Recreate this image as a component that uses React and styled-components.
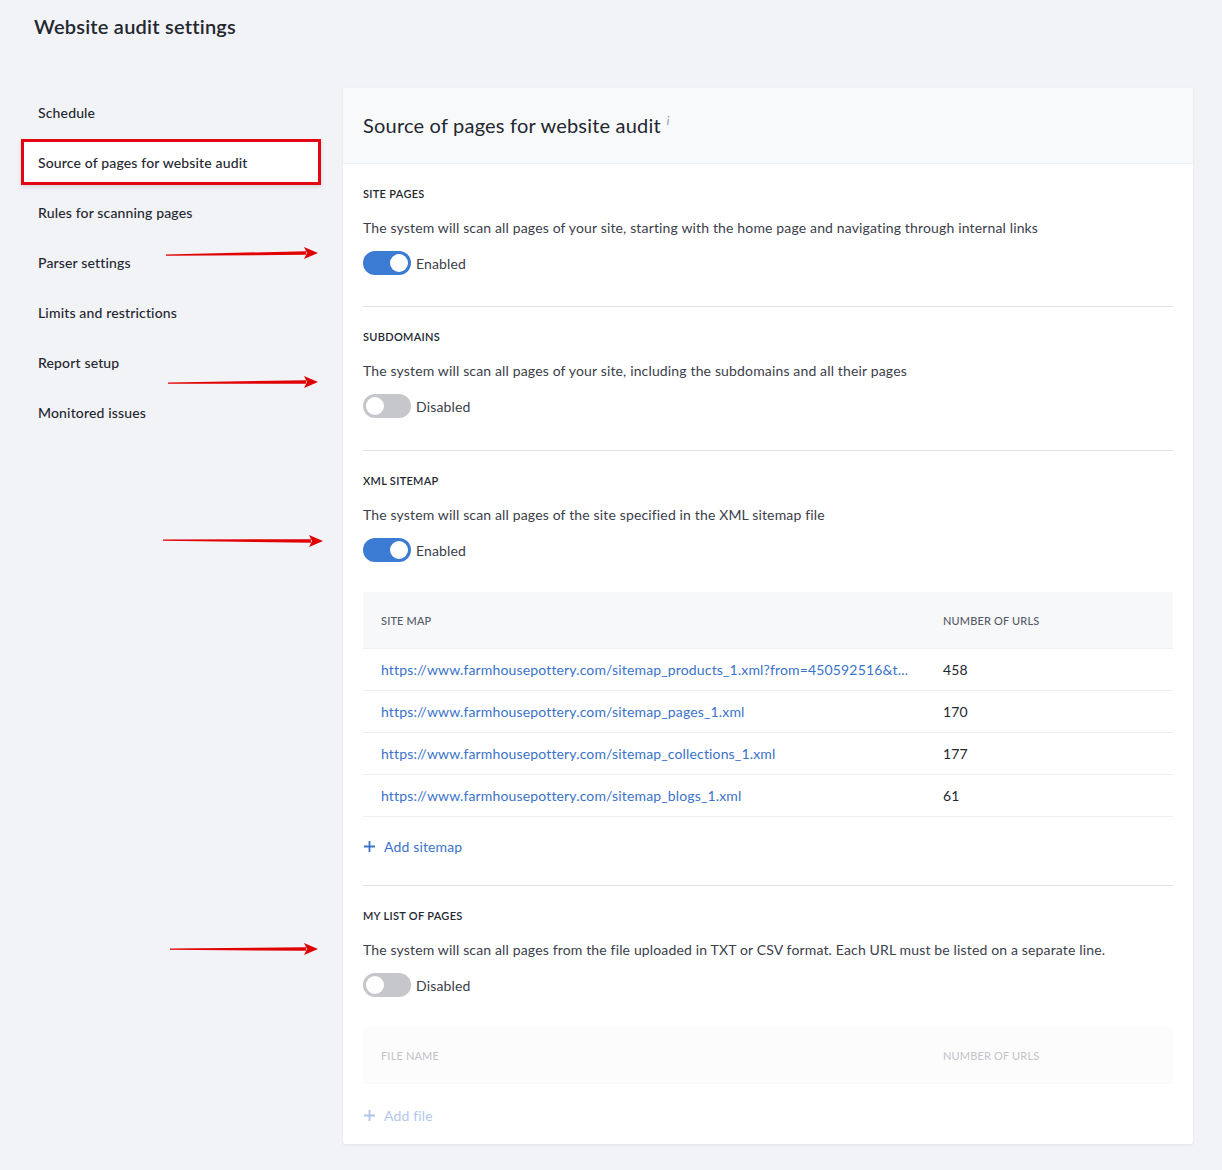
import React from "react";
import styled, { createGlobalStyle } from "styled-components";

const GlobalStyle = createGlobalStyle`
  body {
    margin: 0;
    background: #f2f3f7;
    font-family: Lato, "Noto Sans", sans-serif;
    color: #23272f;
    letter-spacing: 0.15px;
  }
`;

const Page = styled.div`
  position: relative;
  width: 1222px;
  min-height: 1170px;
  padding: 13px 29px 26px 21px;
  box-sizing: border-box;
`;

const Title = styled.h1`
  margin: 0 0 0 13px;
  font-size: 20px;
  line-height: 26px;
  font-weight: 600;
  letter-spacing: 0.22px;
  color: #23272f;
`;

const Layout = styled.div`
  display: flex;
  gap: 22px;
  margin-top: 49px;
  align-items: flex-start;
`;

const Sidebar = styled.nav`
  width: 300px;
  flex-shrink: 0;
  padding-top: 1px;
  display: flex;
  flex-direction: column;
  gap: 4px;
`;

const NavItem = styled.div`
  height: 46px;
  display: flex;
  align-items: center;
  padding-left: ${(p) => (p.$active ? "14px" : "17px")};
  box-sizing: border-box;
  font-size: 14px;
  font-weight: 500;
  color: #23272f;
  background: ${(p) => (p.$active ? "#fff" : "transparent")};
  border: ${(p) => (p.$active ? "3px solid #e30613" : "none")};
  box-shadow: ${(p) => (p.$active ? "0 2px 4px rgba(0,0,0,0.12)" : "none")};
`;

const Card = styled.main`
  flex: 1;
  background: #fff;
  border-radius: 3px;
  box-shadow: 0 1px 3px rgba(30, 40, 60, 0.08);
  overflow: hidden;
`;

const CardHeader = styled.header`
  height: 76px;
  box-sizing: border-box;
  padding: 0 20px 1px;
  display: flex;
  align-items: center;
  background: #f8f9fb;
  border-bottom: 1px solid #eceef2;
  font-size: 20px;
  letter-spacing: 0.2px;
  color: #23272f;
  sup {
    font-style: italic;
    font-size: 11px;
    color: #8a8f99;
    margin-left: 6px;
    align-self: flex-start;
    margin-top: 26px;
  }
`;

const Body = styled.div`
  padding: 0 20px 19px;
`;

const Section = styled.section`
  padding: 23px 0 ${(p) => p.$pb || "31px"};
  border-bottom: ${(p) => (p.$last ? "none" : "1px solid #dfe1e6")};
`;

const Label = styled.h3`
  margin: 0;
  font-size: 11px;
  line-height: 14px;
  font-weight: 600;
  letter-spacing: 0.3px;
  text-transform: uppercase;
  color: #23272f;
`;

const Desc = styled.p`
  margin: 17px 0 0;
  font-size: 14px;
  line-height: 20px;
  color: #3b404a;
`;

const ToggleRow = styled.div`
  display: flex;
  align-items: center;
  gap: 5px;
  margin-top: 13px;
  font-size: 14px;
  color: #3b404a;
`;

const Track = styled.span`
  position: relative;
  width: 48px;
  height: 24px;
  border-radius: 12px;
  background: ${(p) => (p.$on ? "#3b7bd4" : "#c6c7cb")};
  &::after {
    content: "";
    position: absolute;
    top: 3px;
    left: ${(p) => (p.$on ? "27px" : "3px")};
    width: 18px;
    height: 18px;
    border-radius: 50%;
    background: #fff;
  }
`;

const Table = styled.div`
  margin-top: 30px;
  opacity: ${(p) => (p.$faded ? 0.35 : 1)};
`;

const HeadRow = styled.div`
  display: grid;
  grid-template-columns: 580px 1fr;
  height: 56px;
  align-items: center;
  background: #f7f8fa;
  border-bottom: 1px solid #eef0f3;
  font-size: 11px;
  font-weight: 500;
  color: #555b68;
  text-transform: uppercase;
  span {
    padding-left: 18px;
  }
  span + span {
    padding-left: 0;
  }
`;

const Row = styled.div`
  display: grid;
  grid-template-columns: 580px 1fr;
  height: 41px;
  align-items: center;
  border-bottom: 1px solid #eceef2;
  font-size: 14px;
`;

const UrlCell = styled.a`
  padding-left: 18px;
  padding-right: 20px;
  color: #3a73c9;
  text-decoration: none;
  white-space: nowrap;
  overflow: hidden;
  text-overflow: ellipsis;
`;

const CountCell = styled.span`
  color: #23272f;
`;

const AddLink = styled.div`
  display: flex;
  align-items: center;
  gap: 8px;
  margin-top: ${(p) => p.$mt || "19px"};
  height: 20px;
  font-size: 14px;
  color: #3a73c9;
  opacity: ${(p) => (p.$faded ? 0.4 : 1)};
`;

const Arrows = styled.svg`
  position: absolute;
  left: 0;
  top: 0;
  pointer-events: none;
`;

const navItems = [
  "Schedule",
  "Source of pages for website audit",
  "Rules for scanning pages",
  "Parser settings",
  "Limits and restrictions",
  "Report setup",
  "Monitored issues",
];

// first url is shown cut, as in the product
const sitemaps = [
  ["https://www.farmhousepottery.com/sitemap_products_1.xml?from=450592516&t...", 458],
  ["https://www.farmhousepottery.com/sitemap_pages_1.xml", 170],
  ["https://www.farmhousepottery.com/sitemap_collections_1.xml", 177],
  ["https://www.farmhousepottery.com/sitemap_blogs_1.xml", 61],
];

const arrows = [
  [166, 255, 318, 253],
  [168, 383, 318, 382],
  [163, 540, 323, 541],
  [170, 949, 318, 949],
];

const Plus = () => (
  <svg width="13" height="13" viewBox="0 0 13 13">
    <path d="M6.5 1v11M1 6.5h11" stroke="#3a73c9" strokeWidth="1.8" />
  </svg>
);

const Toggle = ({ on }) => (
  <ToggleRow>
    <Track $on={on} />
    {on ? "Enabled" : "Disabled"}
  </ToggleRow>
);

const App = () => (
  <Page>
    <GlobalStyle />
    <Title>Website audit settings</Title>
    <Layout>
      <Sidebar>
        {navItems.map((item, i) => (
          <NavItem key={item} $active={i === 1}>
            {item}
          </NavItem>
        ))}
      </Sidebar>
      <Card>
        <CardHeader>
          Source of pages for website audit<sup>i</sup>
        </CardHeader>
        <Body>
          <Section>
            <Label>Site pages</Label>
            <Desc>
              The system will scan all pages of your site, starting with the home page and navigating through internal links
            </Desc>
            <Toggle on />
          </Section>
          <Section $pb="32px">
            <Label>Subdomains</Label>
            <Desc>The system will scan all pages of your site, including the subdomains and all their pages</Desc>
            <Toggle on={false} />
          </Section>
          <Section $pb="29px">
            <Label>XML sitemap</Label>
            <Desc>The system will scan all pages of the site specified in the XML sitemap file</Desc>
            <Toggle on />
            <Table>
              <HeadRow>
                <span>Site map</span>
                <span>Number of URLs</span>
              </HeadRow>
              {sitemaps.map(([url, n]) => (
                <Row key={url}>
                  <UrlCell href="#">{url}</UrlCell>
                  <CountCell>{n}</CountCell>
                </Row>
              ))}
            </Table>
            <AddLink>
              <Plus />
              Add sitemap
            </AddLink>
          </Section>
          <Section $last $pb="0">
            <Label>My list of pages</Label>
            <Desc>
              The system will scan all pages from the file uploaded in TXT or CSV format. Each URL must be listed on a separate line.
            </Desc>
            <Toggle on={false} />
            <Table $faded>
              <HeadRow>
                <span>File name</span>
                <span>Number of URLs</span>
              </HeadRow>
            </Table>
            <AddLink $faded $mt="21px">
              <Plus />
              Add file
            </AddLink>
          </Section>
        </Body>
      </Card>
    </Layout>
    <Arrows width="1222" height="1170">
      {arrows.map(([x1, y1, x2, y2], i) => (
        <g key={i} fill="#e00000">
          <polygon points={`${x1},${y1 - 0.6} ${x2 - 12},${y2 - 1.8} ${x2 - 12},${y2 + 1.8} ${x1},${y1 + 0.8}`} />
          <polygon points={`${x2 - 14},${y2 - 6} ${x2},${y2} ${x2 - 14},${y2 + 6} ${x2 - 11},${y2}`} />
        </g>
      ))}
    </Arrows>
  </Page>
);

export default App;
